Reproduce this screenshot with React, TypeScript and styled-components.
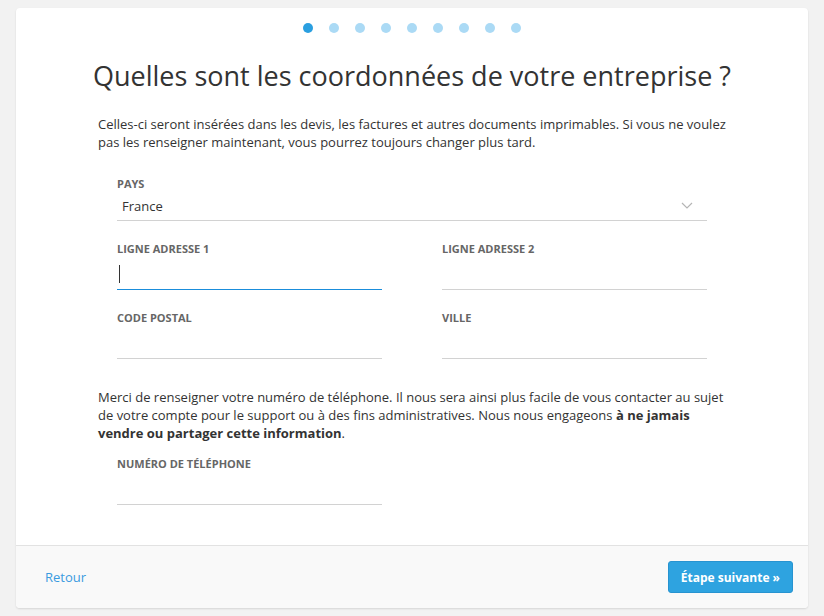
import React from 'react';
import styled, { createGlobalStyle } from 'styled-components';

const GlobalStyle = createGlobalStyle`
  html, body {
    margin: 0;
    padding: 0;
    background: #f2f2f2;
  }
  body {
    font-family: 'Open Sans', 'Liberation Sans', Arial, sans-serif;
    color: #333;
  }
`;

const Page = styled.div`
  padding: 8px 16px;
`;

const Card = styled.div`
  width: 792px;
  height: 600px;
  background: #fff;
  border-radius: 4px;
  box-shadow: 0 1px 2px rgba(0, 0, 0, 0.12);
  display: flex;
  flex-direction: column;
  overflow: hidden;
`;

const Body = styled.div`
  flex: 1;
  padding: 15px 82px 0;
`;

const Dots = styled.div`
  display: flex;
  justify-content: center;
  gap: 16px;
`;

const Dot = styled.span<{ $active?: boolean }>`
  width: 10px;
  height: 10px;
  border-radius: 50%;
  background: ${(p) => (p.$active ? '#2a9fe0' : '#abdaf5')};
`;

const Title = styled.h1`
  margin: 24px -40px 0;
  font-size: 27px;
  line-height: 38px;
  font-weight: 400;
  text-align: center;
  white-space: nowrap;
  color: #333;
`;

const Text = styled.p<{ $top: number }>`
  margin: ${(p) => p.$top}px 0 0;
  font-size: 13px;
  line-height: 18px;
  color: #333;

  strong {
    font-weight: 700;
  }
`;

const Form = styled.div<{ $top: number }>`
  margin-top: ${(p) => p.$top}px;
  padding: 0 19px;
  display: grid;
  grid-template-columns: 265px 265px;
  column-gap: 60px;
  row-gap: 21px;
`;

const Field = styled.div<{ $wide?: boolean }>`
  grid-column: ${(p) => (p.$wide ? '1 / span 2' : 'auto')};
`;

const Label = styled.div`
  font-size: 11px;
  line-height: 14px;
  font-weight: 700;
  text-transform: uppercase;
  color: #666;
`;

const Select = styled.div`
  height: 29px;
  border-bottom: 1px solid #d2d2d2;
  display: flex;
  align-items: center;
  justify-content: space-between;
  padding: 0 14px 0 5px;
  font-size: 13px;
  color: #333;
`;

const Input = styled.div<{ $focused?: boolean }>`
  height: 33px;
  border-bottom: 1px solid ${(p) => (p.$focused ? '#1a8ddb' : '#d2d2d2')};
  display: flex;
  align-items: center;
  padding-left: 2px;
`;

const Caret = styled.span`
  width: 1px;
  height: 18px;
  background: #333;
  margin-top: 2px;
`;

const Footer = styled.div`
  height: 62px;
  border-top: 1px solid #e2e2e2;
  background: #f9f9f9;
  display: flex;
  align-items: center;
  justify-content: space-between;
  padding: 0 15px 0 29px;
`;

const BackLink = styled.a`
  font-size: 13px;
  color: #3a9be0;
  text-decoration: none;
  cursor: pointer;
`;

const NextButton = styled.button`
  height: 32px;
  padding: 0 12px;
  background: #2ea3e0;
  border: 1px solid #2793d0;
  border-radius: 3px;
  color: #fff;
  font-family: inherit;
  font-size: 12px;
  font-weight: 700;
  cursor: pointer;
`;

const Chevron = () => (
  <svg width="12" height="8" viewBox="0 0 12 8">
    <polyline points="1,1 6,6 11,1" fill="none" stroke="#b5b5b5" strokeWidth="1.2" />
  </svg>
);

export default function App() {
  return (
    <Page>
      <GlobalStyle />
      <Card>
        <Body>
          <Dots>
            {Array.from({ length: 9 }).map((_, i) => (
              <Dot key={i} $active={i === 0} />
            ))}
          </Dots>
          <Title>Quelles sont les coordonnées de votre entreprise ?</Title>
          <Text $top={20}>
            Celles-ci seront insérées dans les devis, les factures et autres documents imprimables. Si vous ne voulez
            pas les renseigner maintenant, vous pourrez toujours changer plus tard.
          </Text>
          <Form $top={26}>
            <Field $wide>
              <Label>Pays</Label>
              <Select>
                France
                <Chevron />
              </Select>
            </Field>
            <Field>
              <Label>Ligne adresse 1</Label>
              <Input $focused>
                <Caret />
              </Input>
            </Field>
            <Field>
              <Label>Ligne adresse 2</Label>
              <Input />
            </Field>
            <Field>
              <Label>Code postal</Label>
              <Input />
            </Field>
            <Field>
              <Label>Ville</Label>
              <Input />
            </Field>
          </Form>
          <Text $top={29}>
            Merci de renseigner votre numéro de téléphone. Il nous sera ainsi plus facile de vous contacter au sujet
            de votre compte pour le support ou à des fins administratives. Nous nous engageons{' '}
            <strong>à ne jamais vendre ou partager cette information</strong>.
          </Text>
          <Form $top={15}>
            <Field>
              <Label>Numéro de téléphone</Label>
              <Input />
            </Field>
          </Form>
        </Body>
        <Footer>
          <BackLink>Retour</BackLink>
          <NextButton>Étape suivante »</NextButton>
        </Footer>
      </Card>
    </Page>
  );
}
